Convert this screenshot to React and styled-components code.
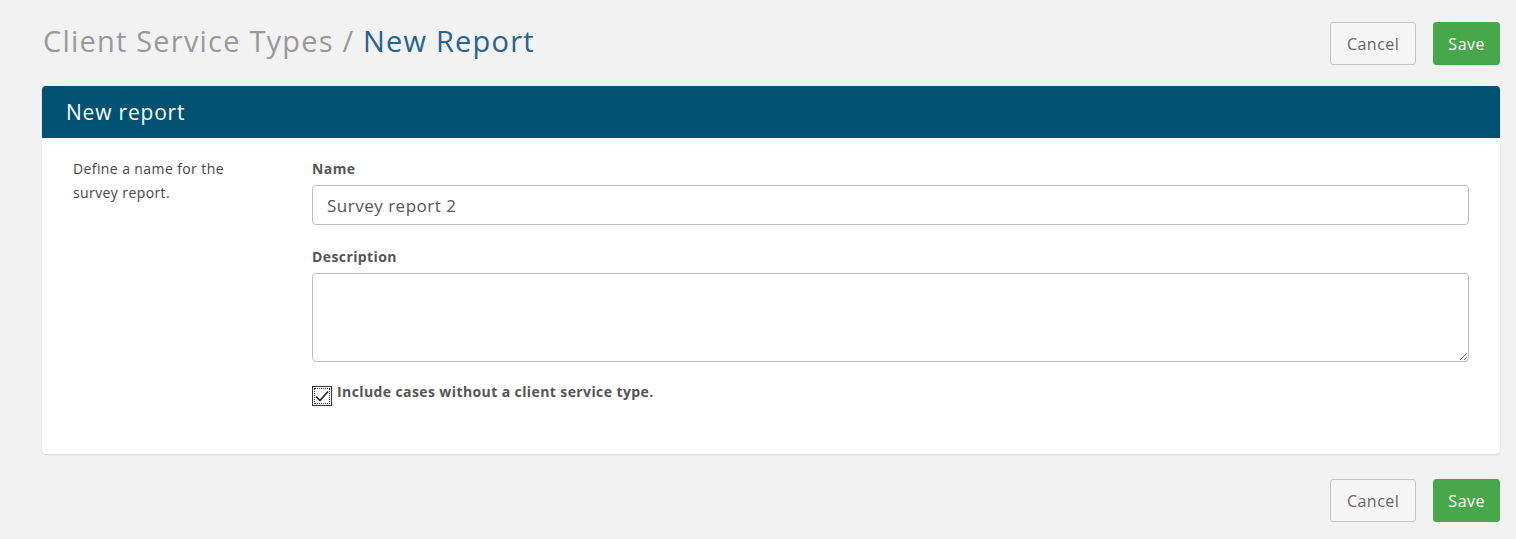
import React, { useState } from 'react'
import styled, { createGlobalStyle } from 'styled-components'

const GlobalStyle = createGlobalStyle`
  * { box-sizing: border-box; }
  body {
    margin: 0;
    background: #f2f2f2;
    font-family: 'Open Sans', 'Liberation Sans', sans-serif;
    color: #555;
  }
`

const Page = styled.div`
  padding: 22px 16px 0 42px;
`

const TopBar = styled.div`
  display: flex;
  align-items: flex-start;
  justify-content: space-between;
  height: 64px;
`

const Title = styled.h1`
  margin: 0;
  padding: 0 0 0 1px;
  font-size: 29px;
  font-weight: 400;
  line-height: 38px;
  letter-spacing: 1.2px;
  color: #999;
`

const Current = styled.span`
  color: #27638f;
`

const Actions = styled.div`
  display: flex;
  gap: 17px;
  justify-content: flex-end;
`

const Button = styled.button`
  height: 43px;
  padding: 0 ${({ primary }) => (primary ? '14px' : '16px')};
  border-radius: 3px;
  font-family: inherit;
  font-size: 16px;
  letter-spacing: 0.5px;
  cursor: pointer;
  border: 1px solid ${({ primary }) => (primary ? '#47a84b' : '#c4c4c4')};
  background: ${({ primary }) => (primary ? '#47a84b' : '#f5f5f5')};
  color: ${({ primary }) => (primary ? '#fff' : '#666')};
`

const Card = styled.section`
  background: #fff;
  border-radius: 4px;
  box-shadow: 0 1px 2px rgba(0, 0, 0, 0.12);
  overflow: hidden;
`

const CardHeader = styled.header`
  height: 52px;
  display: flex;
  align-items: center;
  padding: 0 24px;
  background: #005272;
  color: #fff;
  font-size: 21px;
  letter-spacing: 0.8px;
`

const CardBody = styled.div`
  display: grid;
  grid-template-columns: 239px 1fr;
  padding: 21px 31px 48px 31px;
`

const Hint = styled.p`
  margin: -2px 0 0;
  width: 180px;
  font-size: 14px;
  letter-spacing: 0.4px;
  line-height: 24px;
  color: #444;
`

const Fields = styled.div`
  display: flex;
  flex-direction: column;
`

const Label = styled.label`
  display: block;
  font-size: 14px;
  letter-spacing: 0.4px;
  font-weight: 700;
  color: #555;
  line-height: 20px;
  margin-bottom: 6px;
`

const Field = styled.div`
  margin-bottom: ${({ gap }) => gap}px;
`

const TextInput = styled.input`
  display: block;
  width: 100%;
  height: 40px;
  padding: 0 14px;
  border: 1px solid #bdbdbd;
  border-radius: 4px;
  font-family: inherit;
  font-size: 17px;
  letter-spacing: 0.5px;
  color: #555;
  outline: none;
`

const TextArea = styled.textarea`
  display: block;
  width: 100%;
  height: 89px;
  padding: 8px 14px;
  border: 1px solid #bdbdbd;
  border-radius: 4px;
  font-family: inherit;
  font-size: 17px;
  color: #555;
  outline: none;
  resize: vertical;
`

const CheckRow = styled.label`
  display: flex;
  align-items: flex-start;
  gap: 5px;
  font-size: 14px;
  letter-spacing: 0.4px;
  font-weight: 700;
  color: #555;
  cursor: pointer;
`

const CheckBox = styled.span`
  flex: none;
  width: 20px;
  height: 20px;
  margin-top: 4px;
  border: 1px solid #333;
  outline: 1px dotted #333;
  outline-offset: -3px;
  display: flex;
  align-items: flex-end;
  justify-content: center;
  padding-bottom: 2px;
  background: #fff;
`

const CheckText = styled.span`
  line-height: 20px;
`

const Footer = styled.div`
  display: flex;
  justify-content: flex-end;
  gap: 17px;
  padding: 25px 0 0;
`

function Check({ checked }) {
  return (
    <CheckBox>
      {checked && (
        <svg width="16" height="13" viewBox="0 0 16 13">
          <path d="M2 6.5 L6 10.5 L14 1.5" fill="none" stroke="#222" strokeWidth="1.6" />
        </svg>
      )}
    </CheckBox>
  )
}

export default function App() {
  const [name, setName] = useState('Survey report 2')
  const [checked, setChecked] = useState(true)

  return (
    <>
      <GlobalStyle />
      <Page>
        <TopBar>
          <Title>
            Client Service Types / <Current>New Report</Current>
          </Title>
          <Actions>
            <Button>Cancel</Button>
            <Button primary>Save</Button>
          </Actions>
        </TopBar>
        <Card>
          <CardHeader>New report</CardHeader>
          <CardBody>
            <Hint>Define a name for the survey report.</Hint>
            <Fields>
              <Field gap={22}>
                <Label>Name</Label>
                <TextInput value={name} onChange={e => setName(e.target.value)} />
              </Field>
              <Field gap={20}>
                <Label>Description</Label>
                <TextArea />
              </Field>
              <CheckRow onClick={() => setChecked(c => !c)}>
                <Check checked={checked} />
                <CheckText>Include cases without a client service type.</CheckText>
              </CheckRow>
            </Fields>
          </CardBody>
        </Card>
        <Footer>
          <Button>Cancel</Button>
          <Button primary>Save</Button>
        </Footer>
      </Page>
    </>
  )
}
